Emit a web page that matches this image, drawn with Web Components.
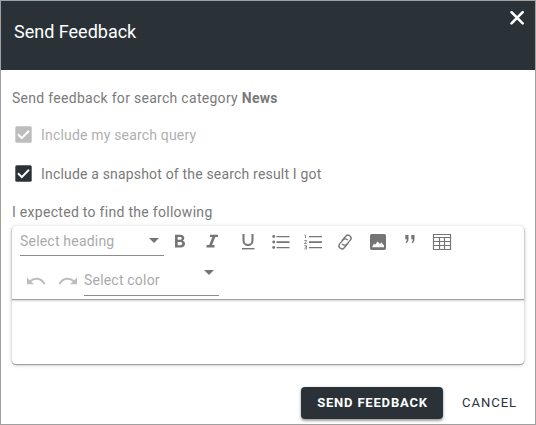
<!DOCTYPE html>
<html lang="en"><head><meta charset="utf-8"><title>Send Feedback</title>
<style>
html,body{margin:0;height:100%;background:#fff}
body{font:14px/20px Roboto,"Liberation Sans",sans-serif;letter-spacing:.2px;color:#7a7a7a}
</style></head><body>
<feedback-dialog></feedback-dialog>
<script>
const define=(name,html,setup)=>customElements.define(name,class extends HTMLElement{
  constructor(){super();const t=document.createElement('template');t.innerHTML=html;
    this.attachShadow({mode:'open'}).append(t.content.cloneNode(true));}
  connectedCallback(){if(setup)setup(this,this.shadowRoot);}
});

const icons={
close:'<path d="M6.500 7.200l11.200 11.200M17.700 7.200L6.500 18.400" fill="none" stroke="currentColor" stroke-width="2.600" stroke-linecap="round"/>',
bold:'<path transform="translate(0 -.8)" fill-rule="evenodd" d="M7 5.600h5.300c2.500 0 4 1.300 4 3.300 0 1.200-.6 2.100-1.600 2.600 1.400.4 2.300 1.500 2.300 3 0 2.300-1.700 3.700-4.300 3.700H7zM9.700 7.800v2.800h2.400c1 0 1.600-.5 1.600-1.400s-.6-1.400-1.600-1.400zM9.700 12.800V16h2.700c1.100 0 1.800-.6 1.800-1.600s-.7-1.600-1.800-1.600z"/>',
italic:'<path transform="translate(0 -.8)" d="M10 5.600h8v2.300h-2.700l-3.200 8H14.500v2.300H6.500v-2.300h2.700l3.200-8H10z"/>',
underline:'<path d="M7.500 4v6.600a4.500 4.500 0 0 0 9 0V4" fill="none" stroke="currentColor" stroke-width="2"/><path d="M6 18h12.500v1.400H6z"/>',
bullets:'<circle cx="4.700" cy="6.500" r="1.400"/><circle cx="4.700" cy="12" r="1.400"/><circle cx="4.700" cy="17.500" r="1.400"/><path d="M7.500 6h13v1.300h-13zM7.500 11.200h13V13h-13zM7.500 17h13v1.300h-13z"/>',
numbers:'<path d="M8 6h13v1.300H8zM8 11.200h13V13H8zM8 17h13v1.300H8z"/><path d="M3.500 5.200h1v3M3.300 10.500h2.300v.4l-2.100 2.600h2.300M3.300 15.600h2.200v3.300H3.300M3.800 17.200h1.500" fill="none" stroke="currentColor" stroke-width=".8"/>',
link:'<g transform="rotate(-50 12 12) translate(12 12) scale(1.15) translate(-12 -12)" fill="none" stroke="currentColor" stroke-width="1.200"><path d="M11.200 9.300h5a2.600 2.600 0 0 1 0 5.200h-4.500a2.600 2.600 0 0 1-2.500-3.300"/><path d="M12.800 14.700h-5a2.600 2.600 0 0 1 0-5.200h4.500a2.600 2.600 0 0 1 2.500 3.300"/></g>',
image:'<path fill-rule="evenodd" d="M5.700 4h12.600A1.700 1.700 0 0 1 20 5.700v12.600a1.700 1.700 0 0 1-1.700 1.700H5.700A1.700 1.700 0 0 1 4 18.300V5.700A1.700 1.700 0 0 1 5.700 4zM6 17.300h12v-1.800l-2.700-3.200-1.300 1.600-2.400-2.400-2.400 3.300-1.200-1.200z"/>',
quote:'<path d="M7.300 5h3.200v3.600c0 2.500-.7 4-2.300 4.700l-.7-.7c.8-.8 1.200-1.900 1.300-3.400H7.300zM13.300 5h3.200v3.600c0 2.500-.7 4-2.300 4.700l-.7-.7c.8-.8 1.200-1.900 1.300-3.400h-1.500z"/>',
table:'<path d="M3.500 4.500h17v15h-17zM3.500 7.500h17M3.500 11.500h17M3.500 15.500h17M9.500 7.500v12M14.500 7.500v12" fill="none" stroke="currentColor" stroke-width="1.200"/>',
undo:'<path d="M3 8.500v6.800h7l-2.700-2.500c4.500-3.400 9.800-2.300 12.200 2.700l1.800-.5C19 8.400 11.600 6.700 5.700 11.200z"/>',
redo:'<path d="M21 8.500v6.800h-7l2.700-2.500c-4.500-3.400-9.800-2.300-12.200 2.700l-1.800-.5C5 8.400 12.400 6.700 18.300 11.200z"/>'
};
define('ui-icon','<style>:host{display:block;width:24px;height:24px;flex:none}svg{display:block;width:100%;height:100%;fill:currentColor}</style><svg viewBox="0 0 24 24"></svg>',
 (h,r)=>r.querySelector('svg').innerHTML=icons[h.getAttribute('name')]);

define('dialog-header',`<style>:host{display:flex;justify-content:space-between;height:69px;background:#2a3238;color:#fff;box-sizing:border-box;padding:4px 6px 0 13px}
h1{font-size:18px;line-height:24px;font-weight:400;letter-spacing:0;margin:15px 0 0}</style><h1><slot></slot></h1><ui-icon name="close"></ui-icon>`);

define('check-option',`<style>:host{display:flex;align-items:center;gap:9px;height:20px;padding-left:3px;letter-spacing:.18px}
:host([disabled]){color:#b0b0b0;--box:#bdbdbd}
svg{width:17px;height:17px;flex:none;margin-top:-1px}rect{fill:var(--box,#2a3238)}path{fill:none;stroke:#fff;stroke-width:2}</style>
<svg viewBox="0 0 17 17"><rect x=".3" y=".3" width="16.400" height="16.400" rx="1.500"/><path d="M3 8.300l3.800 3.800 7.200-7.400"/></svg><span><slot></slot></span>`);

define('select-field',`<style>:host{display:flex;flex:none;box-sizing:border-box;justify-content:space-between;height:30px;border-bottom:1px solid #8b8b8b;color:#aaa;padding:5px 5px 0 0}
span{margin-top:var(--text-top,0)}
i{width:0;height:0;border:5px solid transparent;border-top-color:#757575;border-bottom:0;margin-top:var(--arrow-top,7px)}</style><span><slot></slot></span><i></i>`);

define('rich-editor',`<style>:host{display:flex;flex-direction:column;height:138px;border-radius:4px;box-shadow:0 1px 1px #999,0 1px 4px rgba(0,0,0,.22)}
.tools{box-sizing:border-box;height:73px;padding:0 8px;border-radius:4px 4px 0 0;box-shadow:0 1px 1px #999,0 2px 3px rgba(0,0,0,.15)}
.row{display:flex;align-items:center;gap:8px;height:30px}
.row ui-icon{color:#757575;margin-top:2px}
.row+.row{height:40px;align-items:flex-end}
.row+.row ui-icon{color:#bdbdbd;margin-bottom:3px}
.heading{width:144px;margin-right:-4px}
.color{width:135px;--arrow-top:-1px;--text-top:-1px;margin-left:-4px}
.row ui-icon:first-child{margin-left:4px}.u{margin-left:4px}.s{margin-left:1px}
.edit{flex:1}</style>
<div class="tools"><div class="row"><select-field class="heading">Select heading</select-field>
<ui-icon name="bold"></ui-icon><ui-icon name="italic"></ui-icon><ui-icon class="u" name="underline"></ui-icon><ui-icon class="s" name="bullets"></ui-icon><ui-icon name="numbers"></ui-icon><ui-icon name="link"></ui-icon><ui-icon class="s" name="image"></ui-icon><ui-icon name="quote"></ui-icon><ui-icon name="table"></ui-icon></div>
<div class="row"><ui-icon name="undo"></ui-icon><ui-icon name="redo"></ui-icon><select-field class="color">Select color</select-field></div></div><div class="edit" contenteditable="true"></div>`);

define('action-button',`<style>:host{display:flex;align-items:center;justify-content:center;box-sizing:border-box;height:32px;border-radius:4px;font-size:13px;letter-spacing:1px;color:#2a3238}
:host([primary]){background:#2a3238;color:#fff;width:142px;font-weight:700;letter-spacing:.82px;padding-left:1px;box-shadow:0 2px 2px rgba(0,0,0,.25),0 1px 4px rgba(0,0,0,.2)}</style><slot></slot>`);

define('feedback-dialog',`<style>:host{display:flex;flex-direction:column;box-sizing:border-box;width:536px;height:425px;border:1px solid #a0a0a0;background:#fff}
main{padding:18px 11px 0}p{margin:0;letter-spacing:.29px}b{font-weight:700}
check-option{margin-top:17px}check-option+check-option{margin-top:19px}
.label{margin-top:18px}rich-editor{margin-top:4px}
footer{display:flex;gap:19px;margin-top:23px;padding-left:300px}</style>
<dialog-header>Send Feedback</dialog-header><main><p>Send feedback for search category <b>News</b></p>
<check-option disabled>Include my search query</check-option><check-option>Include a snapshot of the search result I got</check-option>
<p class="label">I expected to find the following</p><rich-editor></rich-editor></main>
<footer><action-button primary>SEND FEEDBACK</action-button><action-button>CANCEL</action-button></footer>`);
</script></body></html>
